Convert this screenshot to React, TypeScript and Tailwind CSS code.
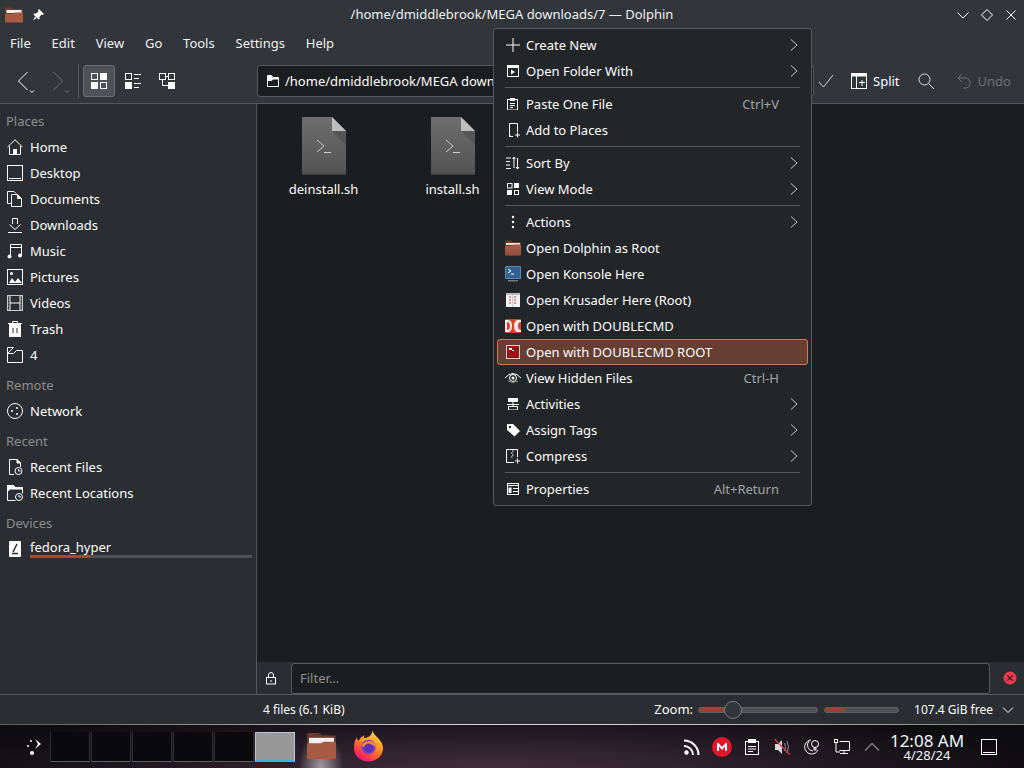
import React from "react";

const W = "#fcfcfc";

const Ic = ({ s = 16, children, className = "" }: { s?: number; children: React.ReactNode; className?: string }) => (
  <svg width={s} height={s} viewBox={`0 0 ${s} ${s}`} fill="none" stroke={W} strokeWidth={1} className={`shrink-0 ${className}`}>
    {children}
  </svg>
);

const Folder = () => (
  <svg width="16" height="16" viewBox="0 0 16 16" className="shrink-0">
    <defs>
      <linearGradient id="fold" x1="0" y1="0" x2="0" y2="1">
        <stop offset="0" stopColor="#a9604a" />
        <stop offset="1" stopColor="#8f4e3a" />
      </linearGradient>
    </defs>
    <path d="M0 1.500Q0 .5 1 .5H6L7.500 2H15Q16 2 16 3V14.500Q16 15.500 15 15.500H1Q0 15.500 0 14.500Z" fill="#6b3a2b" />
    <rect x="1" y="3" width="14" height="2" fill="#e9e4e0" />
    <path d="M0 6H6.500L8 4.500H16V14.500Q16 15.500 15 15.500H1Q0 15.500 0 14.500Z" fill="url(#fold)" />
  </svg>
);

const Home = () => (
  <Ic><path d="M.5 8 8 .8 15.500 8M2.500 7v8.500h11V7" /><rect x="6" y="10" width="4" height="5.500" fill={W} stroke="none" /></Ic>
);
const Desktop = () => (
  <Ic><rect x=".5" y=".5" width="15" height="15" /><path d="M2 13.500h12" /></Ic>
);
const Documents = () => (
  <Ic><path d="M4.500 12.500H.5v-12H7l2 2" /><path d="M4.500 3.500h6l4 4v8h-10z" /><path d="M10.500 3.500v4h4" fill={W} /></Ic>
);
const Downloads = () => (
  <Ic><path d="M5.500 7V1.500h5V7M2.500 7.500 8 12.500l5.500-5M1 15.500h14" /></Ic>
);
const Music = () => (
  <Ic><path d="M3.500 13V1.500h11V12M3.500 4.500h11" /><circle cx="2.500" cy="13.500" r="2" fill={W} stroke="none" /><circle cx="13" cy="12.500" r="2" fill={W} stroke="none" /></Ic>
);
const Pictures = () => (
  <Ic><rect x=".5" y=".5" width="15" height="15" /><circle cx="4.500" cy="4.500" r="1.500" fill={W} stroke="none" /><path d="M2 14l3-5 3 4 3-4 4 5z" fill={W} stroke="none" /></Ic>
);
const Videos = () => (
  <Ic><rect x=".5" y=".5" width="15" height="15" stroke="#ccc" /><path d="M3 1v14M13 1v14M3 8h10" /><path d="M1 2h1M1 5h1M1 8h1M1 11h1M1 14h1M14 2h1M14 5h1M14 8h1M14 11h1M14 14h1" stroke="#999" /></Ic>
);
const Trash = () => (
  <Ic><path d="M2 3h12v13H2z" fill={W} stroke="none" /><path d="M1 2.500h14M5.500 2V.5h5V2" /><path d="M6 7v5M10 7v5" stroke="#2a2e32" /></Ic>
);
const FolderOutline = () => (
  <Ic><path d="M.5 15.500V.5h6l-6 6h6l3-3h6v12z" /></Ic>
);
const Network = () => (
  <Ic><circle cx="8" cy="8" r="7.500" /><circle cx="5" cy="8" r="1" fill={W} stroke="none" /><circle cx="10" cy="5" r="1" fill={W} stroke="none" /><circle cx="10" cy="11" r="1" fill={W} stroke="none" /></Ic>
);
const RecentFiles = () => (
  <Ic><path d="M7 15.500H2.500V.5H10l3.500 3.500V8" /><path d="M10 .5v3.500h3.500z" fill={W} /><circle cx="11.500" cy="12" r="3.500" /><path d="M11.500 10v2h2" /></Ic>
);
const RecentLoc = () => (
  <Ic><path d="M.5 15.500V.5h6l2 2h7v6" /><path d="M.5 6l3-2h12V2.500h-7L6.500.5H.5z" fill={W} /><path d="M.5 15.500h8" /><circle cx="12" cy="12" r="3.500" /><path d="M12 10v2h2" /></Ic>
);
const Drive = () => (
  <Ic><rect x="2" y="0" width="12" height="16" rx="1" fill={W} stroke="none" /><path d="M10 3 6 11M5 12.500h6" stroke="#2a2e32" strokeWidth={1.500} /></Ic>
);

const Txt = ({ children, className = "" }: { children: React.ReactNode; className?: string }) => (
  <span className={className}>{children}</span>
);

const SideRow = ({ icon, label }: { icon: React.ReactNode; label: string }) => (
  <div className="h-[26px] flex items-center pl-[7px] gap-[7px] text-[#fcfcfc]">
    {icon}
    <Txt>{label}</Txt>
  </div>
);
const SideHead = ({ label, top = false }: { label: string; top?: boolean }) => (
  <div className={`h-[26px] flex items-center pl-[6px] text-[#8a8d90] ${top ? "" : "mt-[4px]"}`}>
    <Txt>{label}</Txt>
  </div>
);

const FileIcon = () => (
  <svg width="44" height="58" viewBox="0 0 44 58">
    <defs>
      <linearGradient id="fg" x1="0" y1="0" x2="0" y2="1">
        <stop offset="0" stopColor="#6e6e6e" />
        <stop offset="1" stopColor="#525252" />
      </linearGradient>
    </defs>
    <path d="M0 0H30L44 14V58H0Z" fill="url(#fg)" />
    <rect x="0" y="56.500" width="44" height="1.500" fill="#3f3f3f" />
    <path d="M30 14H44V28Z" fill="#000" opacity=".15" />
    <path d="M30 0 44 14H30Z" fill="#bdbdbd" />
    <path d="M15 23l7 6-7 6M22 35.500h7" fill="none" stroke="#c9c9c9" strokeWidth="1" />
  </svg>
);

const FileCell = ({ name }: { name: string }) => (
  <div className="w-[129px] flex flex-col items-center">
    <FileIcon />
    <span className="mt-[8px] text-[#fcfcfc]">{name}</span>
  </div>
);

const Chevron = () => (
  <svg width="8" height="14" viewBox="0 0 8 14" fill="none" stroke="#c8cacc" strokeWidth="1" className="shrink-0">
    <path d="M1 1.500 7 7l-6 5.500" />
  </svg>
);

const Konsole = () => (
  <svg width="16" height="16" viewBox="0 0 16 16" className="shrink-0">
    <rect x="0" y="0" width="16" height="13" rx="1" fill="#5b88bb" />
    <rect x="1" y="1" width="14" height="11" fill="#33608f" />
    <path d="M3 3l3 2-3 2M6 8h3" stroke="#fff" fill="none" />
    <rect x="3" y="14" width="10" height="1.500" fill="#777" />
  </svg>
);
const Krusader = () => (
  <svg width="16" height="16" viewBox="0 0 16 16" className="shrink-0">
    <rect x="1" y="1" width="14" height="14" fill="#f2f2f2" />
    <rect x="1" y="1" width="14" height="2" fill="#bbb" />
    <path d="M7.500 3v12" stroke="#ccc" />
    <path d="M4 5h2M4 8h2M4 11h2M9 5h2M9 8h2M9 11h2" stroke="#d33" />
  </svg>
);
const DC = () => (
  <svg width="16" height="16" viewBox="0 0 16 16" className="shrink-0">
    <rect x="0" y="1" width="16" height="14" rx="1" fill="#d8402c" />
    <path d="M0 2h3q4 0 4 6t-4 6H0z M2 4v8q3 0 3-4t-3-4z" fill="#f4e9e6" fillRule="evenodd" />
    <path d="M16 2h-3q-4 0-4 6t4 6h3v-2q-3 0-3-4t3-4z" fill="#f4e9e6" />
  </svg>
);
const DCRoot = () => (
  <svg width="14" height="14" viewBox="0 0 14 14" className="shrink-0">
    <rect x="0" y="0" width="14" height="14" fill="#d8d2cf" />
    <rect x="1" y="1" width="12" height="12" fill="#9a1218" />
    <rect x="3" y="3" width="3" height="2" fill="#eee" />
    <rect x="6" y="5" width="2" height="1" fill="#eee" />
  </svg>
);

type Item = { icon?: React.ReactNode; label: string; sc?: string; sub?: boolean; hi?: boolean; sep?: boolean };

const menu: Item[] = [
  { icon: <Ic><path d="M8 1v14M1 8h14" /></Ic>, label: "Create New", sub: true },
  { icon: <Ic s={12}><rect x=".5" y=".5" width="11" height="11" /><path d="M1 2h10" strokeWidth="2" /><path d="M4 4.500v5l4-2.500z" fill={W} stroke="none" /></Ic>, label: "Open Folder With", sub: true },
  { sep: true, label: "" },
  { icon: <Ic s={12}><rect x=".5" y="1.500" width="10" height="10.500" /><rect x="3" y="0" width="5" height="3" fill={W} stroke="none" /><path d="M3 5.500h5M3 7.500h5M3 9.500h3" /></Ic>, label: "Paste One File", sc: "Ctrl+V" },
  { icon: <Ic><path d="M8 14.500H4.500v-13h8V10" /><path d="M4.500 14.500l1-1M12.500 10.500v5M10 13h5" /></Ic>, label: "Add to Places" },
  { sep: true, label: "" },
  { icon: <Ic><path d="M1 3h5M1 6.500h4M1 10h4M1 13.500h5M9 13V2L7.500 4M9 2l1.500 2M12.500 3v11l-1.500-2M12.500 14l1.500-2" /></Ic>, label: "Sort By", sub: true },
  { icon: <Ic s={12}><rect x=".5" y=".5" width="4.500" height="4.500" /><rect x="7" y="0" width="5" height="5" fill={W} stroke="none" /><rect x="0" y="7" width="5" height="5" fill={W} stroke="none" /><rect x="7.500" y="7.500" width="4" height="4" /></Ic>, label: "View Mode", sub: true },
  { sep: true, label: "" },
  { icon: <Ic><circle cx="8" cy="3" r="1.200" fill={W} stroke="none" /><circle cx="8" cy="8" r="1.200" fill={W} stroke="none" /><circle cx="8" cy="13" r="1.200" fill={W} stroke="none" /></Ic>, label: "Actions", sub: true },
  { icon: <Folder />, label: "Open Dolphin as Root" },
  { icon: <Konsole />, label: "Open Konsole Here" },
  { icon: <Krusader />, label: "Open Krusader Here (Root)" },
  { icon: <DC />, label: "Open with DOUBLECMD" },
  { icon: <DCRoot />, label: "Open with DOUBLECMD ROOT", hi: true },
  { icon: <Ic><path d="M0 8Q8-1 16 8" /><circle cx="8" cy="8" r="3.500" /><circle cx="8" cy="8" r="1.500" fill={W} stroke="none" /><path d="M3 11q5 3 10 0" stroke="#888" /></Ic>, label: "View Hidden Files", sc: "Ctrl-H" },
  { icon: <Ic s={12}><rect x="1" y="0" width="10" height="4" fill={W} stroke="none" /><path d="M0 6.500h12" /><rect x="1.500" y="8.500" width="9" height="3.500" /><path d="M6 4v4.500" /></Ic>, label: "Activities", sub: true },
  { icon: <Ic><path d="M2 2h6L15 9l-5.500 5.500L2 8z" fill={W} stroke="none" /><circle cx="5" cy="5" r="1.200" fill="#232629" stroke="none" /></Ic>, label: "Assign Tags", sub: true },
  { icon: <Ic><path d="M9 14.500H1.500v-13h11V9" /><path d="M7 3h1.500M6 5h1.500M7 7h1.500M6 9h1.500M12.500 10.500v5M10 13h5" /></Ic>, label: "Compress", sub: true },
  { sep: true, label: "" },
  { icon: <Ic s={12}><rect x=".5" y=".5" width="11" height="11" /><path d="M1 2.500h10" /><rect x="1.500" y="4.500" width="3" height="5.500" fill={W} stroke="none" /><path d="M6 5.500h5M6 8.500h5" /></Ic>, label: "Properties", sc: "Alt+Return" },
];

const Menu = () => (
  <div className="absolute left-[493px] top-[28px] w-[319px] h-[478px] bg-[#232629] border border-[#55585c] rounded-[3px] p-[3px] text-[#fcfcfc]">
    {menu.map((m, i) =>
      m.sep ? (
        <div key={i} className="h-[7px] flex items-center px-[8px]">
          <div className="h-px w-full bg-[#55585c]" />
        </div>
      ) : (
        <div
          key={i}
          className={
            m.hi
              ? "h-[26px] flex items-center pl-[7px] pr-[9px] rounded-[3px] bg-[#663e32] border border-[#d9764f]"
              : "h-[26px] flex items-center pl-[8px] pr-[10px]"
          }
        >
          <span className="w-[16px] flex justify-center shrink-0">{m.icon}</span>
          <Txt className="ml-[5px] flex-1">{m.label}</Txt>
          {m.sc && <Txt className="text-[#a1a3a5] mr-[19px]">{m.sc}</Txt>}
          {m.sub && <Chevron />}
        </div>
      )
    )}
  </div>
);

const Firefox = () => (
  <svg width="31" height="32" viewBox="0 0 32 32" className="shrink-0">
    <defs>
      <linearGradient id="ffa" x1="0.800" y1="0" x2="0.200" y2="1">
        <stop offset="0" stopColor="#ffe14a" />
        <stop offset=".45" stopColor="#ff8a1e" />
        <stop offset=".8" stopColor="#ff3050" />
        <stop offset="1" stopColor="#e0148a" />
      </linearGradient>
    </defs>
    <path d="M20 0c1 3 3 5 6 8 4 4 5 8 5 10 0 8-7 14-15 14S1 26 1 18c0-5 1-8 3-11 0 2 1 3 2 4 1-3 3-5 6-6-1 2-1 3 0 3 4-1 8-3 8-8z" fill="url(#ffa)" />
    <path d="M4 12c3-2 6-2 8 0l6-2c-4-3-9-3-14 2z" fill="#ffa52a" />
    <circle cx="16" cy="17" r="7.500" fill="#6f3fc8" />
    <path d="M9 15c2-3 6-5 10-4 3 1 5 4 5 7-2-3-5-4-7-3-2 .5-1 2 1 2-1 2-5 2-7 0-1-1-2-1-2-2z" fill="#ff8a1e" />
    <circle cx="16" cy="18" r="4.500" fill="#5b30b5" />
  </svg>
);

const Tray = ({ children }: { children: React.ReactNode }) => (
  <div className="w-[30px] flex justify-center shrink-0">{children}</div>
);

function FolderOutlineSmall() {
  return (
    <svg width="12" height="12" viewBox="0 0 12 12" fill="none" stroke={W} className="shrink-0">
      <path d="M.5 11.500V.5h4l1.500 2h5.500v9z" />
      <path d="M1 1h3.500L6 3h5v1.500H6L4.500 6H1z" fill={W} stroke="none" />
    </svg>
  );
}

export default function App() {
  return (
    <div
      className="relative w-[1024px] h-[768px] overflow-hidden flex flex-col bg-[#31363b] text-[13px] leading-none text-[#fcfcfc]"
      style={{ fontFamily: '"Noto Sans", sans-serif' }}
    >
      {/* Title bar */}
      <div className="h-[30px] shrink-0 flex items-center relative">
        <div className="pl-[5px] flex items-center gap-[9px]">
          <svg width="18" height="16" viewBox="0 0 18 16">
            <path d="M0 1.500Q0 .5 1 .5H7L8.500 2H18V15H0Z" fill="#6b3a2b" />
            <rect x="1.500" y="3" width="15" height="3" fill="#f4f1ee" />
            <path d="M0 7H8L9.500 5.500H18V15.500H0Z" fill="#a65a43" />
          </svg>
          <svg width="12" height="12" viewBox="0 0 12 12" fill={W}>
            <path d="M7 0 12 5 10.500 6 9.500 5.500 7.500 8 7.500 10 6.500 10.500 1.500 5.500 2 4.500 4 4.500 6.500 2.500 6 1.500zM3 7.500 4.500 9 1 11.500z" />
          </svg>
        </div>
        <div className="absolute left-0 right-0 pb-[2px] text-center text-[#eff0f1]">/home/dmiddlebrook/MEGA downloads/7 — Dolphin</div>
        <div className="ml-auto flex items-center gap-[10px] pr-[6px]">
          <svg width="14" height="14" viewBox="0 0 14 14" fill="none" stroke={W}><path d="M1.500 4.500 7 10l5.500-5.500" /></svg>
          <svg width="14" height="14" viewBox="0 0 14 14" fill="none" stroke={W}><path d="M7 1.500 12.500 7 7 12.500 1.500 7z" /></svg>
          <svg width="14" height="14" viewBox="0 0 14 14" fill="none" stroke={W}><path d="M2.500 2.500l9 9M11.500 2.500l-9 9" /></svg>
        </div>
      </div>

      {/* Menu bar */}
      <div className="h-[28px] shrink-0 flex items-center pl-[10px] pb-[2px] gap-[20.8px] text-[#eff0f1]">
        {["File", "Edit", "View", "Go", "Tools", "Settings", "Help"].map((m) => (
          <span key={m}>{m}</span>
        ))}
      </div>

      {/* Toolbar */}
      <div className="h-[46px] shrink-0 flex items-center border-b border-[#55585c]">
        <div className="flex items-center pl-[17px]">
          <svg width="20" height="26" viewBox="0 0 20 26" fill="none" stroke={W}>
            <path d="M10.500 4 1.500 13l9 9" />
            <path d="M13 22.500l2 2 2-2" />
          </svg>
          <svg width="20" height="26" viewBox="0 0 20 26" fill="none" stroke="#6e7174" className="ml-[15px]">
            <path d="M1.500 4l9 9-9 9" />
            <path d="M13 22.500l2 2 2-2" />
          </svg>
        </div>
        <div className="w-px h-[34px] bg-[#55585c] ml-[6px]" />
        <div className="ml-[4px] w-[32px] h-[32px] flex items-center justify-center bg-[#4d5257] border border-[#6b6f73] rounded-[3px]">
          <Ic>
            <rect x=".5" y=".5" width="6" height="6" />
            <rect x="9" y="0" width="7" height="7" fill={W} stroke="none" />
            <rect x="0" y="9" width="7" height="7" fill={W} stroke="none" />
            <rect x="9.500" y="9.500" width="6" height="6" />
          </Ic>
        </div>
        <div className="ml-[10px]">
          <Ic>
            <rect x=".5" y=".5" width="6" height="6" />
            <rect x="0" y="9" width="7" height="7" fill={W} stroke="none" />
            <path d="M9 1.500h7M9 5.500h5M9 10.500h7M9 14.500h5" />
          </Ic>
        </div>
        <div className="ml-[18px]">
          <Ic>
            <rect x=".5" y=".5" width="6" height="6" />
            <rect x="9.500" y=".5" width="6" height="6" />
            <rect x="9" y="9" width="7" height="7" fill={W} stroke="none" />
            <path d="M3.500 7v5.500H9M6.500 3.500h3" />
          </Ic>
        </div>
        <div className="ml-[82px] w-[557px] h-[32px] shrink-0 flex items-center bg-[#1b1e20] border border-[#55585c] rounded-[3px] pl-[9px] gap-[6px] text-[#fcfcfc] overflow-hidden whitespace-nowrap">
          <FolderOutlineSmall />
          <span className="pt-[2px]">/home/dmiddlebrook/MEGA downloads/7</span>
        </div>
        <svg width="16" height="16" viewBox="0 0 16 16" fill="none" stroke="#d0d2d3" className="ml-[4px] shrink-0">
          <path d="M1 9l4.500 5L15 2" />
        </svg>
        <svg width="16" height="16" viewBox="0 0 16 16" fill="none" stroke={W} className="ml-[17px] shrink-0">
          <rect x=".5" y=".5" width="15" height="15" />
          <path d="M1 2h14" strokeWidth="3" />
          <path d="M5.500 3v12M8 9.500h6M11 7v6" />
        </svg>
        <span className="ml-[6px] pt-[2px]">Split</span>
        <svg width="16" height="16" viewBox="0 0 16 16" fill="none" stroke="#e0e1e2" className="ml-[18px] shrink-0">
          <circle cx="6.500" cy="6.500" r="5.500" />
          <path d="M10.500 10.500 16 16" />
        </svg>
        <svg width="14" height="16" viewBox="0 0 14 16" fill="none" stroke="#6e7174" className="ml-[23px] shrink-0">
          <path d="M5 1 1 5l4 4M1 5h7q5 0 5 5t-5 5H6" />
        </svg>
        <span className="ml-[7px] pt-[2px] text-[#6e7174]">Undo</span>
      </div>

      {/* Main */}
      <div className="flex-1 min-h-0 flex">
        <div className="w-[257px] shrink-0 bg-[#2a2e32] border-r border-[#55585c] pt-[4px]">
          <SideHead label="Places" top />
          <SideRow icon={<Home />} label="Home" />
          <SideRow icon={<Desktop />} label="Desktop" />
          <SideRow icon={<Documents />} label="Documents" />
          <SideRow icon={<Downloads />} label="Downloads" />
          <SideRow icon={<Music />} label="Music" />
          <SideRow icon={<Pictures />} label="Pictures" />
          <SideRow icon={<Videos />} label="Videos" />
          <SideRow icon={<Trash />} label="Trash" />
          <SideRow icon={<FolderOutline />} label="4" />
          <SideHead label="Remote" />
          <SideRow icon={<Network />} label="Network" />
          <SideHead label="Recent" />
          <SideRow icon={<RecentFiles />} label="Recent Files" />
          <SideRow icon={<RecentLoc />} label="Recent Locations" />
          <SideHead label="Devices" />
          <div className="h-[26px] flex items-center pl-[7px] gap-[7px]">
            <Drive />
            <div className="flex-1 pr-[4px] pt-[1px]">
              <div className="-mb-[1px]">fedora_hyper</div>
              <div className="h-[3px] mt-[2px] bg-[#4d4f52] overflow-hidden">
                <div className="h-full w-[60px] bg-[#a24b33]" />
              </div>
            </div>
          </div>
        </div>

        <div className="flex-1 min-w-0 flex flex-col bg-[#1b1e20]">
          <div className="flex-1 min-h-0 flex items-start pl-[2px] pt-[13px]">
            <FileCell name="deinstall.sh" />
            <FileCell name="install.sh" />
          </div>
          <div className="h-[32px] shrink-0 flex items-center bg-[#2a2e32]">
            <svg width="12" height="13" viewBox="0 0 12 13" fill="none" stroke={W} className="ml-[8px] shrink-0">
              <rect x="1.500" y="5.500" width="9" height="6.500" />
              <path d="M3.500 5.500V3a2.500 2.500 0 0 1 5 0v2.500" />
              <path d="M6 8v2" />
            </svg>
            <div className="ml-[14px] w-[699px] h-[31px] bg-[#1b1e20] border border-[#55585c] rounded-[3px] flex items-center pl-[8px] text-[#8d8f91]">
              <Txt>Filter...</Txt>
            </div>
            <svg width="14" height="14" viewBox="0 0 14 14" className="ml-[13px] shrink-0">
              <circle cx="7" cy="7" r="6.500" fill="#e93a50" />
              <path d="M4.300 4.300l5.400 5.400M9.700 4.300l-5.400 5.400" stroke="#31181c" strokeWidth="1.200" />
            </svg>
          </div>
        </div>
      </div>

      {/* Status bar */}
      <div className="h-[30px] shrink-0 flex items-center bg-[#2a2e32] border-t border-[#55585c] pl-[263px] pr-[10px]">
        <Txt className="text-[12px]">4 files (6.1 KiB)</Txt>
        <Txt className="ml-auto">Zoom:</Txt>
        <div className="ml-[5px] relative w-[120px] h-[6px] rounded-full bg-[#4d5154] border border-[#5e6164]">
          <div className="h-full w-[30px] rounded-l-full bg-[#93442f]" />
          <div className="absolute left-[25px] -top-[7px] w-[18px] h-[18px] rounded-full bg-[#31363b] border border-[#7a7d80]" />
        </div>
        <div className="ml-[6px] w-[75px] h-[6px] rounded-full bg-[#4d5154] border border-[#5e6164] overflow-hidden">
          <div className="h-full w-[20px] bg-[#93442f]" />
        </div>
        <Txt className="ml-[15px] text-[12px]">107.4 GiB free</Txt>
        <svg width="12" height="8" viewBox="0 0 12 8" fill="none" stroke={W} className="ml-[9px] shrink-0">
          <path d="M1 1.500l5 5 5-5" />
        </svg>
      </div>

      <Menu />

      {/* Task bar */}
      <div className="h-[44px] shrink-0 flex flex-col bg-[radial-gradient(ellipse_55%_140%_at_48%_100%,#412d3d_0%,#1c151d_70%,#0d0c0f_100%)]">
        <div className="h-px shrink-0 bg-[linear-gradient(90deg,#5a5a5c,#d8d4d4_45%,#d8d4d4_60%,#7c7c7e)]" />
        <div className="flex-1 min-h-0 flex items-center">
          <svg width="20" height="20" viewBox="0 0 20 20" fill="none" className="ml-[23px] shrink-0">
            <circle cx="5" cy="9" r="1" fill={W} />
            <circle cx="8" cy="4" r="1" fill={W} />
            <circle cx="9" cy="16" r="2" fill={W} />
            <path d="M12 2l6 5-6 5 3-5z" fill={W} />
          </svg>
          <div className="ml-[7px] flex gap-px">
            {[0, 1, 2, 3, 4].map((i) => (
              <div key={i} className="w-[40px] h-[30px] bg-[#0a090c] border-b border-[#5e5e62] border-x border-x-[#2e2e32]" />
            ))}
            <div className="w-[40px] h-[30px] bg-[#979797] border border-[#b9c6e0] border-b-[2px] border-b-[#3daee9]" />
          </div>
          <div className="ml-[1px] relative w-[50px] h-[43px] flex items-center justify-center shrink-0">
            <div className="absolute inset-0 bg-[radial-gradient(ellipse_45%_85%_at_50%_100%,rgba(255,255,255,0.55),rgba(255,255,255,0)_100%)]" />
            <svg width="29" height="26" viewBox="0 0 30 27" className="relative mb-[2px]">
              <path d="M0 2Q0 0 2 0H12L15 2.500H29Q30 2.500 30 4V26H0Z" fill="#6b3a2b" />
              <rect x="2" y="5" width="26" height="6" fill="#f4f1ee" />
              <path d="M0 11H14L17 9H30V26Q30 27 29 27H1Q0 27 0 26Z" fill="#a65a43" />
            </svg>
          </div>
          <div className="ml-[7px] mb-[2px]">
            <Firefox />
          </div>

          <div className="ml-auto flex items-center">
            <Tray>
              <svg width="16" height="16" viewBox="0 0 16 16" fill="none" stroke={W} strokeWidth="2">
                <circle cx="2.500" cy="13.500" r="2.200" fill={W} stroke="none" />
                <path d="M0 7a9 9 0 0 1 9 9M0 1.500A14.500 14.500 0 0 1 14.500 16" />
              </svg>
            </Tray>
            <Tray>
              <svg width="20" height="20" viewBox="0 0 20 20">
                <circle cx="10" cy="10" r="10" fill="#e2152b" />
                <path d="M5 14V6h1.500L10 10l3.500-4H15v8h-2V9.500L10 13 7 9.500V14z" fill="#fff" />
              </svg>
            </Tray>
            <Tray>
              <svg width="14" height="16" viewBox="0 0 14 16" fill="none" stroke={W}>
                <rect x=".5" y="2.500" width="13" height="13" />
                <rect x="3" y="0" width="8" height="4" fill={W} stroke="none" />
                <path d="M3 7.500h8M3 10h8M3 12.500h5" />
              </svg>
            </Tray>
            <Tray>
              <svg width="17" height="16" viewBox="0 0 17 16" fill="none" stroke={W}>
                <path d="M1 5h3l4-4v14l-4-4H1z" fill="#d8d8d8" stroke="none" />
                <path d="M10.500 4q2 4 0 8M13 2q3 6 0 12" stroke="#8a8a8a" />
                <path d="M.5 0l15.500 16" stroke="#e23a4a" strokeWidth="1.200" />
              </svg>
            </Tray>
            <Tray>
              <svg width="18" height="16" viewBox="0 0 18 16" fill="none" stroke={W}>
                <path d="M8 1a7 7 0 1 0 7 10" />
                <path d="M6 2a6 6 0 0 0 4 10" />
                <circle cx="12" cy="5" r="3.500" />
                <path d="M11 9h2v2h-2z" />
              </svg>
            </Tray>
            <Tray>
              <svg width="16" height="16" viewBox="0 0 16 16" fill="none" stroke={W}>
                <rect x=".5" y=".5" width="3" height="3" />
                <path d="M2 4v9M2 13h4M5.500 2.500h10v9h-10M10 11.500v3M6 14.500h8" />
              </svg>
            </Tray>
            <Tray>
              <svg width="16" height="10" viewBox="0 0 16 10" fill="none" stroke="#7b7c7e" strokeWidth="1.500">
                <path d="M1 8.500l7-7 7 7" />
              </svg>
            </Tray>
            <div className="w-[88px] ml-[-4px] flex flex-col items-center text-[#eff6fb]">
              <span className="text-[17px] leading-[17px]">12:08 AM</span>
              <span className="text-[13px] leading-[13px]">4/28/24</span>
            </div>
            <div className="ml-[10px] mr-[27px]">
              <Ic>
                <rect x=".5" y=".5" width="15" height="15" />
                <path d="M2 13.500h12" />
              </Ic>
            </div>
          </div>
        </div>
      </div>
    </div>
  );
}
